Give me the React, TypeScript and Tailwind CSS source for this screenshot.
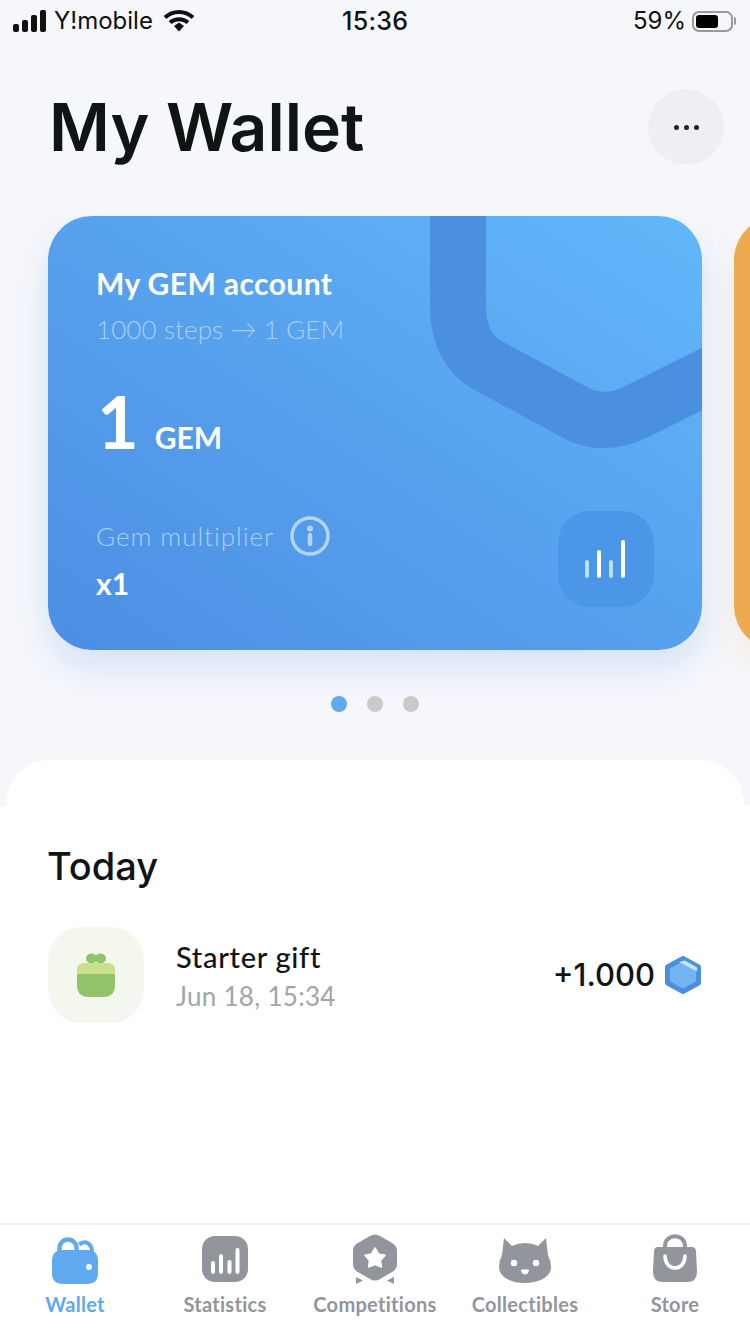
const lato = "font-['Lato',sans-serif]";

function StatusBar() {
  return (
    <div className="relative flex h-10 items-center justify-between pl-[13px] pr-[14px] pt-[2px] font-['Inter',sans-serif] text-[24px] text-[#111]">
      <div className="flex items-center gap-[7px]">
        <svg width="34" height="22" viewBox="0 0 34 22" fill="#111">
          <rect x="0" y="14" width="6" height="8" rx="2" />
          <rect x="9" y="10" width="6" height="12" rx="2" />
          <rect x="18" y="5" width="6" height="17" rx="2" />
          <rect x="27" y="0" width="6" height="22" rx="2" />
        </svg>
        <span className="text-[24px] leading-none">Y!mobile</span>
        <svg width="32" height="24" viewBox="0 0 32 24" className="ml-[3px]">
          <path d="M2 8.500C10 1 22 1 30 8.500" fill="none" stroke="#111" strokeWidth="4" />
          <path d="M7 13.500C12 9 20 9 25 13.500" fill="none" stroke="#111" strokeWidth="4" />
          <path d="M11 17L16 13.500L21 17L16 22.500Z" fill="#111" />
        </svg>
      </div>
      <span className="absolute left-[342px] top-[7px] text-[25px] font-medium leading-7 tracking-[0.3px]">15:36</span>
      <div className="flex items-center gap-[6px]">
        <span className="text-[24px] leading-none">59%</span>
        <div className="flex items-center">
          <div className="flex h-[21px] w-[41px] items-center rounded-[7px] border-2 border-[#999] p-[2px]">
            <div className="h-full w-[22px] rounded-[3px] bg-black" />
          </div>
          <div className="ml-px h-2 w-[2px] rounded-r bg-[#999]" />
        </div>
      </div>
    </div>
  );
}

function Header() {
  return (
    <div className="flex h-[176px] items-center justify-between pl-[49px] pr-[26px] pb-[2px]">
      <h1 className="mt-[-1px] font-['Inter',sans-serif] text-[66px] font-semibold leading-none text-[#111414]">
        My Wallet
      </h1>
      <button className="flex h-[76px] w-[76px] items-center justify-center gap-[5px] rounded-full bg-[#eeeff2]">
        <span className="h-[5px] w-[5px] rounded-full bg-[#222]" />
        <span className="h-[5px] w-[5px] rounded-full bg-[#222]" />
        <span className="h-[5px] w-[5px] rounded-full bg-[#222]" />
      </button>
    </div>
  );
}

function Card() {
  return (
    <div className="relative flex h-[434px] w-[654px] shrink-0 flex-col overflow-hidden rounded-[44px] bg-linear-to-tr from-[#4c8ee3] via-[#58a3ee] via-55% to-[#62b8fb] pl-[48px] pt-[49px] text-white">
      <svg className="absolute left-0 top-0" width="654" height="434" viewBox="0 0 654 434" fill="none">
        <path
          d="M410 -10V90Q410 134 442 150.500L527 196.500Q556 212 589 195.500L690 145"
          stroke="#4a8fe0"
          strokeWidth="56"
        />
      </svg>
      <div className={`relative flex flex-col ${lato}`}>
        <span className="text-[30px] font-bold leading-9 tracking-[0.4px]">My GEM account</span>
        <span className="mt-[10px] text-[26px] font-light leading-9 tracking-[0.1px] text-[#a9d0f6]">1000 steps → 1 GEM</span>
        <div className="mt-[32px] flex items-baseline">
          <span className="ml-px text-[72px] font-bold leading-[84px]">1</span>
          <span className="ml-[16px] text-[30px] font-bold">GEM</span>
        </div>
        <div className="mt-[53px] flex items-center">
          <span className="text-[26px] font-light leading-9 tracking-[0.95px] text-[#a9d0f6]">Gem multiplier</span>
          <svg className="ml-[16px]" width="40" height="40" viewBox="0 0 40 40" fill="none">
            <circle cx="20" cy="20" r="18" stroke="#b1d5f7" strokeWidth="3.500" />
            <circle cx="20" cy="12.500" r="3" fill="#b1d5f7" />
            <path d="M20 19V28" stroke="#b1d5f7" strokeWidth="4.500" strokeLinecap="round" />
          </svg>
        </div>
        <span className="mt-[9px] text-[30px] font-bold leading-9">x1</span>
      </div>
      <div className="absolute bottom-[43px] right-[48px] flex h-24 w-24 items-center justify-center rounded-[32px] bg-[#4c96e8]">
        <svg width="42" height="38" viewBox="0 0 42 38">
          <rect x="0" y="20" width="4" height="18" rx="2" fill="#b8e0fb" />
          <rect x="12" y="10" width="4" height="28" rx="2" fill="#fff" />
          <rect x="24" y="20" width="4" height="18" rx="2" fill="#b8e0fb" />
          <rect x="36" y="0" width="4" height="38" rx="2" fill="#fff" />
        </svg>
      </div>
    </div>
  );
}

function Carousel() {
  return (
    <div className="flex flex-col">
      <div className="flex gap-8 overflow-hidden pb-[76px] pl-12">
        <div className="rounded-[44px] shadow-[0_18px_36px_rgba(78,144,229,0.2)]">
          <Card />
        </div>
        <div className="h-[434px] w-[654px] shrink-0 rounded-[44px] bg-[#eeaa4e] shadow-[0_18px_36px_rgba(238,170,78,0.15)]" />
      </div>
      <div className="relative mt-[-30px] flex justify-center gap-[20px] pr-[1px]">
        <span className="h-4 w-4 rounded-full bg-[#5ea9f0]" />
        <span className="h-4 w-4 rounded-full bg-[#cacaca]" />
        <span className="h-4 w-4 rounded-full bg-[#cacaca]" />
      </div>
    </div>
  );
}

function GiftIcon() {
  return (
    <svg width="38" height="44" viewBox="0 0 38 44">
      <ellipse cx="14.500" cy="5.500" rx="5.500" ry="5" fill="#92c36b" />
      <ellipse cx="23.500" cy="5.500" rx="5.500" ry="5" fill="#92c36b" />
      <path d="M0 21V17Q0 10 8 10H30Q38 10 38 17V21Z" fill="#cbdf8e" />
      <path d="M0 21H38V32Q38 44 26 44H12Q0 44 0 32Z" fill="#92c36b" />
    </svg>
  );
}

function GemIcon() {
  return (
    <svg width="36" height="38" viewBox="0 0 36 38">
      <path d="M18 2.500L33.500 11V27L18 35.500L2.500 27V11Z" fill="#73b4f3" stroke="#4a8fe0" strokeWidth="5" strokeLinejoin="round" />
      <path d="M14 6L20 4.500L32 11.500V15.500Z" fill="#c3e8fb" />
    </svg>
  );
}

function Sheet() {
  return (
    <div className="mt-[48px] flex flex-1 flex-col">
      <div className="mx-[6px] h-[46px] rounded-t-[44px] bg-white" />
      <div className="flex flex-1 flex-col bg-white px-12">
        <h2 className="-ml-px mt-[36px] font-['Inter',sans-serif] text-[38px] font-medium leading-[48px] text-[#111414]">Today</h2>
        <div className="mt-[37px] flex items-center">
          <div className="flex h-24 w-24 items-center justify-center rounded-[34px] bg-[#f3f7ee]">
            <GiftIcon />
          </div>
          <div className={`ml-8 flex flex-col ${lato}`}>
            <span className="text-[29px] font-medium leading-9 tracking-[0.7px] text-[#111414]">Starter gift</span>
            <span className="mt-[5px] text-[26px] leading-8 tracking-[0.3px] text-[#a2a5aa]">Jun 18, 15:34</span>
          </div>
          <div className="ml-auto flex items-center gap-[10px] pr-[1px]">
            <span className="font-['Inter',sans-serif] text-[31px] font-medium text-[#111414]">+1.000</span>
            <GemIcon />
          </div>
        </div>
      </div>
    </div>
  );
}

function WalletIcon() {
  return (
    <svg width="46" height="47" viewBox="0 0 46 47">
      <path d="M27 7.500C35 2 40 8 40 15" fill="none" stroke="#60a9f0" strokeWidth="4" />
      <path d="M7.500 16V11A8.500 8.500 0 0 1 24.500 11V16" fill="none" stroke="#60a9f0" strokeWidth="4.500" />
      <path d="M0 24Q0 13 11 13H35Q46 13 46 24V36Q46 47 35 47H11Q0 47 0 36Z" fill="#60a9f0" />
      <circle cx="37" cy="30" r="3" fill="#fff" />
    </svg>
  );
}

function StatsIcon() {
  return (
    <svg width="46" height="46" viewBox="0 0 46 46">
      <rect width="46" height="46" rx="13" fill="#92959c" />
      <rect x="9" y="25" width="4" height="13" rx="2" fill="#fff" />
      <rect x="17" y="18" width="4" height="20" rx="2" fill="#fff" />
      <rect x="25.500" y="24" width="4" height="14" rx="2" fill="#fff" />
      <rect x="33.500" y="12" width="4" height="26" rx="2" fill="#fff" />
    </svg>
  );
}

function CompetitionIcon() {
  return (
    <svg width="46" height="51" viewBox="0 0 46 51">
      <path d="M4 43L11 46.500L4 50Z" fill="#92959c" />
      <path d="M42 43L35 46.500L42 50Z" fill="#92959c" />
      <path d="M18 2Q23 -1 28 2L41 9.500Q45 12 45 17V30Q45 35 41 37.500L28 45Q23 48 18 45L5 37.500Q1 35 1 30V17Q1 12 5 9.500Z" fill="#92959c" />
      <path d="M23 14L26.500 20L33 21.300L28.500 26.500L29.500 33L23 30.500L16.500 33L17.500 26.500L13 21.300L19.500 20Z" fill="#fff" stroke="#fff" strokeWidth="1.500" strokeLinejoin="round" />
    </svg>
  );
}

function CatIcon() {
  return (
    <svg width="52" height="46" viewBox="0 0 52 46">
      <path d="M5 1L13 9Q19 6 26 6Q33 6 39 9L47 1L49 18Q52 24 52 30C52 40 40 46 26 46C12 46 0 40 0 30Q0 24 3 18Z" fill="#92959c" />
      <circle cx="15" cy="26" r="3.200" fill="#fff" />
      <circle cx="37" cy="26" r="3.200" fill="#fff" />
      <path d="M22 32.500H30Q30 37 26 37.500Q22 37 22 32.500Z" fill="#fff" />
    </svg>
  );
}

function StoreIcon() {
  return (
    <svg width="44" height="48" viewBox="0 0 44 48">
      <path d="M12 16V12C12 -1 32 -1 32 12V16" fill="none" stroke="#92959c" strokeWidth="4" />
      <path d="M5 13H39Q43 13 43 18L44 38Q44 48 34 48H10Q0 48 0 38L1 18Q1 13 5 13Z" fill="#92959c" />
      <path d="M12 22C12 38 32 38 32 22" fill="none" stroke="#fff" strokeWidth="3.500" strokeLinecap="round" />
    </svg>
  );
}

const tabs = [
  { label: "Wallet", icon: <WalletIcon />, active: true, box: "pb-[1px]" },
  { label: "Statistics", icon: <StatsIcon />, active: false, box: "pb-[3px]" },
  { label: "Competitions", icon: <CompetitionIcon />, active: false, box: "pb-0" },
  { label: "Collectibles", icon: <CatIcon />, active: false, box: "pb-[2px]" },
  { label: "Store", icon: <StoreIcon />, active: false, box: "pb-[3px]" },
];

function TabBar() {
  return (
    <nav className="grid h-[111px] grid-cols-5 border-t-2 border-[#eceff3] bg-white">
      {tabs.map((t) => (
        <div key={t.label} className="flex flex-col items-center">
          <div className={`flex h-[60px] items-end justify-center ${t.box}`}>{t.icon}</div>
          <span
            className={`mt-[5px] whitespace-nowrap ${lato} text-[20px] font-bold leading-7 tracking-[0.3px] ${
              t.active ? "text-[#60a9f0]" : "text-[#92959c]"
            }`}
          >
            {t.label}
          </span>
        </div>
      ))}
    </nav>
  );
}

export default function App() {
  return (
    <div className="flex h-[1334px] w-[750px] flex-col overflow-hidden bg-[#f6f7fb]">
      <StatusBar />
      <Header />
      <Carousel />
      <Sheet />
      <TabBar />
    </div>
  );
}
